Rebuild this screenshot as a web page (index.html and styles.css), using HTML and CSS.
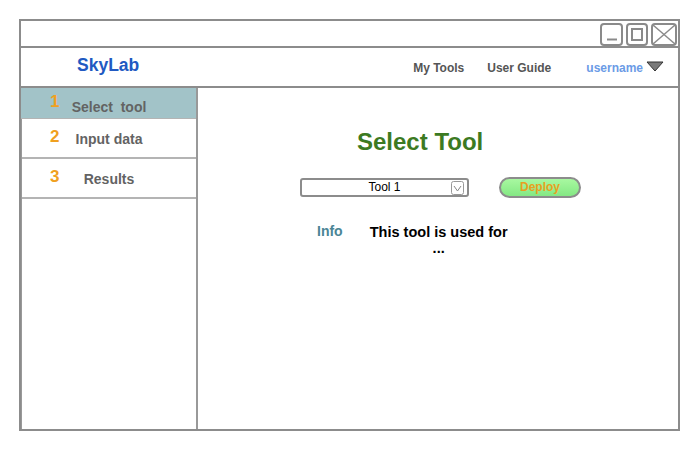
FILE: index.html
```html
<!DOCTYPE html>
<html>
<head>
<meta charset="utf-8">
<link rel="stylesheet" href="styles.css">
</head>
<body>
<div class="window">
  <div class="titlebar">
    <svg class="winbtns" width="78" height="23" viewBox="0 0 78 23">
      <rect x="1" y="1" width="21" height="21" rx="3" fill="none" stroke="#8a8a8a" stroke-width="2"/>
      <line x1="7" y1="16.5" x2="17" y2="16.5" stroke="#8a8a8a" stroke-width="2"/>
      <rect x="27" y="1" width="20" height="21" rx="3" fill="none" stroke="#8a8a8a" stroke-width="2"/>
      <rect x="32" y="6" width="10" height="11" fill="none" stroke="#8a8a8a" stroke-width="2"/>
      <rect x="52" y="1" width="24" height="21" rx="3" fill="none" stroke="#8a8a8a" stroke-width="2"/>
      <line x1="53" y1="2" x2="75" y2="21" stroke="#8a8a8a" stroke-width="1.5"/>
      <line x1="75" y1="2" x2="53" y2="21" stroke="#8a8a8a" stroke-width="1.5"/>
    </svg>
  </div>
  <div class="header">
    <div class="logo">SkyLab</div>
    <div class="nav">
      <span class="nav-link">My Tools</span>
      <span class="nav-link guide">User Guide</span>
      <span class="user">username</span>
      <svg class="caret" width="18" height="11" viewBox="0 0 18 11"><polygon points="1,1 17,1 9,10" fill="#7a7a7a" stroke="#333" stroke-width="1"/></svg>
    </div>
  </div>
  <div class="body">
    <div class="sidebar">
      <div class="step active"><span class="num">1</span><span class="label first">Select&nbsp; tool</span></div>
      <div class="step"><span class="num">2</span><span class="label">Input data</span></div>
      <div class="step"><span class="num">3</span><span class="label">Results</span></div>
    </div>
    <div class="main">
      <h1 class="title">Select Tool</h1>
      <div class="controls">
        <div class="select">Tool 1
          <svg class="sel-arrow" width="13" height="14" viewBox="0 0 13 14"><rect x="0.5" y="0.5" width="12" height="13" rx="2" fill="#fff" stroke="#999"/><polyline points="3,5 6.5,10 10,5" fill="none" stroke="#888" stroke-width="1"/></svg>
        </div>
        <div class="deploy">Deploy</div>
      </div>
      <div class="info-row">
        <div class="info">Info</div>
        <div class="desc">This tool is used for ...</div>
      </div>
    </div>
  </div>
</div>
</body>
</html>
```
FILE: styles.css
```css
html, body {
  margin: 0;
  padding: 0;
  background: #fff;
}
body {
  font-family: "Liberation Sans", Arial, sans-serif;
}
.window {
  margin: 19px 0 0 19px;
  width: 661px;
  height: 412px;
  box-sizing: border-box;
  border: 2px solid #8c8c8c;
  display: flex;
  flex-direction: column;
}
.titlebar {
  height: 25px;
  border-bottom: 2px solid #8c8c8c;
  display: flex;
  justify-content: flex-end;
  align-items: flex-end;
}
.winbtns {
  display: block;
}
.header {
  height: 38px;
  border-bottom: 2px solid #8c8c8c;
  display: flex;
  align-items: center;
  justify-content: space-between;
  padding: 0 14px 0 56px;
}
.logo {
  font-weight: bold;
  font-size: 17.5px;
  color: #2159c2;
  margin-top: -4px;
}
.nav {
  display: flex;
  align-items: center;
  font-size: 12px;
  font-weight: bold;
  margin-top: 1px;
}
.nav-link {
  color: #555;
}
.guide {
  margin-left: 23px;
}
.user {
  color: #6b9be6;
  margin-left: 35px;
}
.caret {
  display: block;
  margin-left: 3px;
  margin-top: -3px;
}
.body {
  flex: 1;
  display: flex;
}
.sidebar {
  width: 174px;
  border-right: 2px solid #999;
  border-left: 1px solid #999;
}
.step {
  height: 38px;
  border-bottom: 2px solid #b4b4b4;
  display: grid;
  grid-template-columns: 9px 100px;
  padding-left: 28px;
  align-items: center;
}
.step.active {
  height: 30px;
  border-bottom: 1px solid #b4b4b4;
  background: #a2c3c8;
  margin-left: -1px;
  padding-left: 29px;
}
.num {
  font-size: 17px;
  font-weight: bold;
  color: #f0a020;
  margin-bottom: 3px;
}
.label {
  font-size: 14px;
  font-weight: bold;
  color: #636363;
  text-align: center;
  margin-top: 1px;
}
.label.first {
  margin-top: 7px;
}
.main {
  flex: 1;
  padding-top: 40px;
}
.title {
  margin: 0 0 0 159px;
  font-size: 24px;
  line-height: 28px;
  font-weight: bold;
  color: #3c7a22;
}
.controls {
  display: flex;
  align-items: center;
  margin: 21px 0 0 102px;
}
.select {
  position: relative;
  width: 169px;
  height: 19px;
  box-sizing: border-box;
  border: 2px solid #8c8c8c;
  border-radius: 3px;
  font-size: 12px;
  line-height: 15px;
  text-align: center;
  color: #000;
}
.sel-arrow {
  position: absolute;
  right: 3px;
  top: 1px;
}
.deploy {
  margin-left: 30px;
  width: 82px;
  height: 21px;
  box-sizing: border-box;
  border: 2px solid #8c8c8c;
  border-radius: 11px;
  background: linear-gradient(#a8f8a0, #84e884);
  color: #e8a020;
  font-size: 12px;
  font-weight: bold;
  line-height: 17px;
  text-align: center;
}
.info-row {
  display: flex;
  align-items: flex-start;
  margin: 25px 0 0 119px;
}
.info {
  font-size: 14px;
  line-height: 16px;
  font-weight: bold;
  color: #4a8595;
}
.desc {
  margin-left: 24px;
  margin-top: 1px;
  width: 144px;
  font-size: 14.5px;
  line-height: 16px;
  font-weight: bold;
  color: #000;
  text-align: center;
}
```
